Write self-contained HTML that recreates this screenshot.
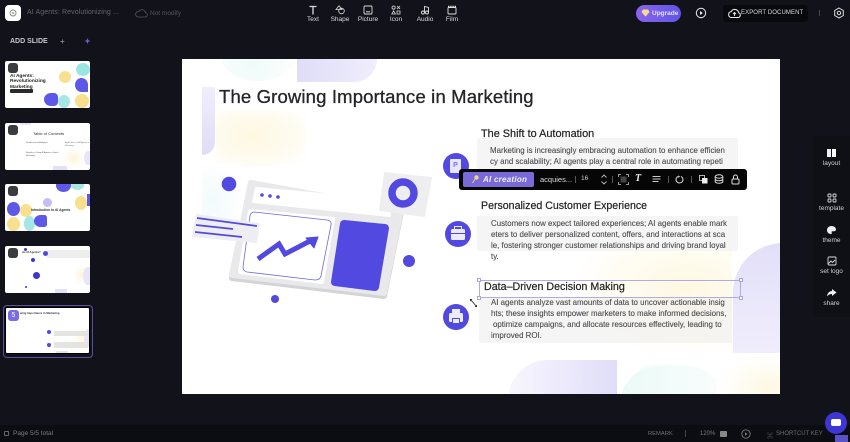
<!DOCTYPE html>
<html><head><meta charset="utf-8">
<style>
*{box-sizing:border-box;margin:0;padding:0}
html,body{width:850px;height:442px;overflow:hidden;background:#12131a;font-family:"Liberation Sans","Noto Sans CJK SC",sans-serif}
.a{position:absolute}
.t{position:absolute;white-space:nowrap}
.tool{position:absolute;top:5px;width:30px;text-align:center;color:#d8d8dc;font-size:6.5px}
.tool svg{display:block;margin:0 auto 1px}
.side{position:absolute;left:813px;width:37px;text-align:center;color:#d0d0d4;font-size:6.5px}
.side svg{display:block;margin:0 auto 2px}
.thumb{position:absolute;left:5px;width:85px;height:47px;background:#fff;border-radius:2px;overflow:hidden}
.num{position:absolute;left:3px;top:2px;width:10px;height:10px;border-radius:3px;background:#3b3b40}
.p{position:absolute;font-size:7.9px;line-height:11px;color:#4a4a4e;white-space:nowrap;-webkit-text-stroke:.1px #4a4a4e}
.h{position:absolute;font-size:10.6px;color:#222;white-space:nowrap;-webkit-text-stroke:.2px #222}
.circ{position:absolute;width:26px;height:26px;border-radius:50%;background:#5249e0}
.box{position:absolute;background:rgba(236,236,236,.55);border-radius:2px}
.hd{position:absolute;width:4px;height:4px;background:#fff;border:1px solid #a9a3e0}
</style></head>
<body>
<div class="a" style="left:0;top:0;width:850px;height:442px;overflow:hidden">

<!-- top bar -->
<div class="a" style="left:5px;top:5px;width:16px;height:16px;background:#fff;border-radius:4px"></div>
<svg class="a" style="left:9px;top:9px" width="8" height="8" viewBox="0 0 8 8"><circle cx="4" cy="4" r="3" fill="none" stroke="#888" stroke-width=".9"/><circle cx="4" cy="4" r="1" fill="#999"/></svg>
<div class="t" style="left:27px;top:9px;font-size:7px;color:#63646c;letter-spacing:.1px">AI Agents: Revolutionizing ...</div>
<svg class="a" style="left:135px;top:8px" width="13" height="10" viewBox="0 0 13 10"><path d="M3 9h7a2.2 2.2 0 0 0 .3-4.4A3.4 3.4 0 0 0 4 3.4 2.800 2.800 0 0 0 3 9z" fill="none" stroke="#55565c" stroke-width=".8"/></svg>
<div class="t" style="left:150px;top:10px;font-size:6.5px;color:#55565c">Not modify</div>

<div class="tool" style="left:298px"><svg width="10" height="10" viewBox="0 0 10 10"><path d="M1.500 1.500h7M5 1.500v8" stroke="#ddd" stroke-width="1.300" fill="none"/></svg>Text</div>
<div class="tool" style="left:325px"><svg width="11" height="10" viewBox="0 0 11 10"><path d="M4 .8 7 4.500H1z" fill="none" stroke="#ddd" stroke-width=".8"/><circle cx="6.500" cy="6" r="2.800" fill="none" stroke="#ddd" stroke-width=".8"/></svg>Shape</div>
<div class="tool" style="left:353px"><svg width="10" height="10" viewBox="0 0 10 10"><rect x="1" y="1" width="8" height="8" rx="1" fill="none" stroke="#ddd" stroke-width=".9"/><path d="M3 6.800h4" stroke="#ddd" stroke-width="1"/></svg>Picture</div>
<div class="tool" style="left:381px"><svg width="10" height="10" viewBox="0 0 10 10"><circle cx="2.600" cy="2.600" r="1.600" fill="none" stroke="#ddd" stroke-width=".8"/><path d="M6 1l3 3M9 1 6 4" stroke="#ddd" stroke-width=".8"/><path d="M2.600 5.800 4.400 9H.8z" fill="none" stroke="#ddd" stroke-width=".8"/><rect x="6" y="6" width="3" height="3" fill="none" stroke="#ddd" stroke-width=".8"/></svg>Icon</div>
<div class="tool" style="left:410px"><svg width="10" height="10" viewBox="0 0 10 10"><circle cx="3" cy="7.500" r="1.500" fill="none" stroke="#ddd" stroke-width=".9"/><path d="M4.500 7.500V1.500l4 1v5" fill="none" stroke="#ddd" stroke-width=".9"/><circle cx="7" cy="7.500" r="1.500" fill="none" stroke="#ddd" stroke-width=".9"/></svg>Audio</div>
<div class="tool" style="left:437px"><svg width="10" height="10" viewBox="0 0 10 10"><rect x="1" y="2.500" width="8" height="6.500" rx=".8" fill="none" stroke="#ddd" stroke-width=".9"/><path d="M1 1.500h8" stroke="#ddd" stroke-width="1.400" stroke-dasharray="1.400 .8"/></svg>Film</div>

<div class="a" style="left:636px;top:5px;width:45px;height:17px;border-radius:9px;background:linear-gradient(90deg,#8a63ee,#5f55e8)"></div>
<svg class="a" style="left:641px;top:9px" width="9" height="8" viewBox="0 0 9 8"><path d="M2 .5h5L8.600 3 4.500 7.600.4 3z" fill="#f4dc8a"/></svg>
<div class="t" style="left:652px;top:10px;font-size:6.5px;font-weight:bold;color:#e6e3fb">Upgrade</div>
<svg class="a" style="left:695px;top:7px" width="12" height="12" viewBox="0 0 12 12"><circle cx="6" cy="6" r="4.700" fill="none" stroke="#eee" stroke-width="1"/><path d="M5 4l2.800 2L5 8z" fill="#eee"/></svg>
<div class="a" style="left:723px;top:5px;width:85px;height:17px;border-radius:3px;background:#08090c"></div>
<svg class="a" style="left:728px;top:7px" width="13" height="12" viewBox="0 0 13 12"><path d="M3 10.500h7.200a2.500 2.500 0 0 0 .5-4.800A4 4 0 0 0 3.200 4.600 3 3 0 0 0 3 10.500z" fill="none" stroke="#eee" stroke-width="1"/><path d="M6.500 9V5.500M5 7l1.500-1.500L8 7" stroke="#eee" stroke-width=".9" fill="none"/></svg>
<div class="t" style="left:741px;top:10px;font-size:6px;color:#dcdce0;letter-spacing:.1px">EXPORT DOCUMENT</div>
<div class="a" style="left:819px;top:10px;width:1px;height:6px;background:#44454a"></div>
<svg class="a" style="left:833px;top:7px" width="12" height="12" viewBox="0 0 12 12"><path d="M6 1 10.300 3.500v5L6 11 1.700 8.500v-5z" fill="none" stroke="#ddd" stroke-width="1"/><circle cx="6" cy="6" r="1.700" fill="none" stroke="#ddd" stroke-width="1"/></svg>

<!-- left -->
<div class="t" style="left:10px;top:38px;font-size:7px;font-weight:bold;color:#c6c6cb">ADD SLIDE</div>
<div class="t" style="left:60px;top:37px;font-size:8px;color:#a5a5aa">+</div>
<svg class="a" style="left:84px;top:37px" width="7" height="8" viewBox="0 0 7 8"><path d="M3.500 1 4.400 3.200 6.500 4 4.400 4.800 3.500 7 2.600 4.800.5 4 2.600 3.200z" fill="#6a5be0"/></svg>

<div class="thumb" style="top:61px">
  <div class="a" style="left:71px;top:2px;width:14px;height:13px;border-radius:50%;background:#9be6e2"></div>
  <div class="a" style="left:54px;top:10px;width:12px;height:12px;border-radius:50%;background:#f8e08e"></div>
  <div class="a" style="left:70px;top:17px;width:13px;height:14px;border-radius:50% 50% 0 50%;background:#5e58e6"></div>
  <div class="a" style="left:39px;top:32px;width:14px;height:13px;border-radius:50% 30% 30% 50%;background:#5e58e6"></div>
  <div class="a" style="left:53px;top:34px;width:12px;height:13px;border-radius:50%;background:#a5e7e4"></div>
  <div class="a" style="left:70px;top:33px;width:14px;height:14px;border-radius:50%;background:#f8e08e"></div>
  <div class="t" style="left:5px;top:13px;font-size:4.800px;line-height:5.300px;font-weight:bold;color:#222">AI Agents:<br>Revolutionizing<br>Marketing</div>
  <div class="a" style="left:5px;top:28px;width:23px;height:4px;border-radius:1px;background:#2a2a2e"></div>
  <div class="num"></div>
</div>
<div class="thumb" style="top:123px">
  <div class="t" style="left:28px;top:8px;font-size:4px;color:#333">Table of Contents</div>
  <div class="t" style="left:21px;top:19px;font-size:2px;color:#555">Introduction to AI Agents</div>
  <div class="t" style="left:60px;top:19px;font-size:2px;line-height:2.500px;color:#777">Applications of AI Agents in<br>Marketing</div>
  <div class="t" style="left:21px;top:29px;font-size:2px;line-height:2.500px;color:#555">Benefits of Using AI Agents in Digital<br>Marketing</div>
  <div class="a" style="left:57px;top:25px;width:24px;height:20px;background:radial-gradient(#fdf5d8,#fff 70%)"></div>
  <div class="a" style="left:79px;top:28px;width:8px;height:14px;border-radius:50% 0 0 50%;background:#e8e5fb"></div>
  <div class="a" style="left:15px;top:0;width:11px;height:2px;background:#e6e3fa"></div>
  <div class="a" style="left:48px;top:43px;width:14px;height:4px;background:#e3e1f8"></div>
  <div class="num"></div>
</div>
<div class="thumb" style="top:184px">
  <div class="a" style="left:51px;top:-5px;width:15px;height:13px;border-radius:50%;background:#5e58e6"></div>
  <div class="a" style="left:66px;top:-3px;width:13px;height:9px;border-radius:50%;background:#a5e7e4"></div>
  <div class="a" style="left:2px;top:18px;width:13px;height:14px;border-radius:50%;background:#5e58e6"></div>
  <div class="a" style="left:15px;top:20px;width:12px;height:13px;border-radius:50%;background:#f8e08e"></div>
  <div class="a" style="left:70px;top:12px;width:12px;height:14px;border-radius:50%;background:#f8e08e"></div>
  <div class="a" style="left:82px;top:10px;width:6px;height:12px;background:#5e58e6"></div>
  <div class="a" style="left:38px;top:14px;width:9px;height:9px;border-radius:50%;background:#c3bff2"></div>
  <div class="a" style="left:2px;top:33px;width:13px;height:14px;border-radius:50%;background:#f8e08e"></div>
  <div class="a" style="left:19px;top:32px;width:11px;height:15px;border-radius:50%;background:#a5e7e4"></div>
  <div class="a" style="left:29px;top:31px;width:13px;height:12px;border-radius:50% 20% 20% 50%;background:#5e58e6"></div>
  <div class="t" style="left:26px;top:24px;font-size:3.300px;font-weight:bold;color:#333">Introduction to AI Agents</div>
  <div class="num"></div>
</div>
<div class="thumb" style="top:246px">
  <div class="t" style="left:17px;top:4px;font-size:2.800px;font-weight:bold;color:#333">do AI Agents?</div>
  <div class="a" style="left:42px;top:4px;width:44px;height:8px;background:#eee"></div>
  <div class="a" style="left:38px;top:5px;width:5px;height:5px;border-radius:50%;background:#5249e0"></div>
  <div class="a" style="left:26px;top:12px;width:4px;height:4px;border-radius:50%;background:#3d36d0"></div>
  <div class="a" style="left:19px;top:2px;width:3px;height:3px;border-radius:50%;background:#3d36d0"></div>
  <div class="a" style="left:28px;top:26px;width:7px;height:7px;border-radius:50%;background:#3d36d0"></div>
  <div class="a" style="left:20px;top:40px;width:2px;height:2px;border-radius:50%;background:#3d36d0"></div>
  <div class="a" style="left:68px;top:19px;width:17px;height:20px;background:radial-gradient(#fdf5d8,#fff 70%)"></div>
  <div class="a" style="left:78px;top:21px;width:9px;height:18px;border-radius:50% 0 0 50%;background:#e8e5fb"></div>
  <div class="a" style="left:50px;top:43px;width:12px;height:4px;background:#e3e1f8"></div>
  <div class="num"></div>
</div>
<div class="a" style="left:3px;top:305px;width:90px;height:53px;border:1px solid #5b4f9e;border-radius:4px"></div>
<div class="thumb" style="top:307px;border:1px solid #000">
  <div class="t" style="left:14px;top:3px;font-size:2.800px;font-weight:bold;color:#333">wing Importance in Marketing</div>
  <div class="a" style="left:68px;top:19px;width:17px;height:20px;background:radial-gradient(#fdf5d8,#fff 70%)"></div>
  <div class="a" style="left:78px;top:21px;width:9px;height:18px;border-radius:50% 0 0 50%;background:#e8e5fb"></div>
  <div class="a" style="left:41px;top:22px;width:4px;height:4px;border-radius:50%;background:#5249e0"></div>
  <div class="a" style="left:48px;top:23px;width:34px;height:5px;background:#e4e4e0"></div>
  <div class="a" style="left:41px;top:35px;width:4px;height:4px;border-radius:50%;background:#5249e0"></div>
  <div class="a" style="left:48px;top:34px;width:34px;height:6px;background:#e4e4e0"></div>
  <div class="a" style="left:50px;top:43px;width:12px;height:4px;background:#e3e1f8"></div>
</div>
<div class="a" style="left:8px;top:310px;width:11px;height:11px;border-radius:3px;background:#7a6ce8;color:#fff;font-size:7px;line-height:11px;text-align:center">5</div>

<!-- bottom bar -->
<div class="a" style="left:0;top:425px;width:850px;height:17px;background:#0c0d12"></div>
<div class="t" style="left:13px;top:430px;font-size:6.500px;color:#7b7c83">Page 5/5 total</div>
<div class="a" style="left:4px;top:431px;width:5px;height:5px;border:1px solid #666;border-radius:1px"></div>
<div class="t" style="left:648px;top:431px;font-size:5.800px;color:#6f7075">REMARK</div>
<div class="a" style="left:685px;top:430px;width:1px;height:7px;background:#44454a"></div>
<div class="t" style="left:700px;top:431px;font-size:6px;color:#77787d">120%</div>
<div class="a" style="left:720px;top:431px;width:7px;height:6px;background:#888;border-radius:1px"></div>
<svg class="a" style="left:741px;top:429px" width="10" height="10" viewBox="0 0 10 10"><circle cx="5" cy="5" r="4.200" fill="none" stroke="#777" stroke-width=".9"/><path d="M4 3.200 6.500 5 4 6.800z" fill="#777"/></svg>
<div class="t" style="left:767px;top:431px;font-size:6px;color:#6a6b70">⌘</div>
<div class="t" style="left:776px;top:431px;font-size:6px;color:#6a6b70">SHORTCUT KEY</div>
<div class="a" style="left:835px;top:435px;width:13px;height:7px;background:#5a52c8"></div>
<div class="a" style="left:825px;top:412px;width:22px;height:22px;border-radius:50%;background:#3d36d4"></div>
<div class="a" style="left:831px;top:419px;width:10px;height:7px;background:#fff;border-radius:2px"></div>

<!-- right panel -->
<div class="a" style="left:813px;top:136px;width:37px;height:181px;background:#0f1015;border-radius:4px 0 0 4px"></div>
<div class="side" style="top:148px"><svg width="11" height="10" viewBox="0 0 11 10"><path d="M1 1h4v8H1z" fill="#eee"/><path d="M6 1h4v8H6z" fill="#fff"/></svg>layout</div>
<div class="side" style="top:193px"><svg width="10" height="10" viewBox="0 0 10 10"><g fill="none" stroke="#ddd" stroke-width=".9"><rect x="1" y="1" width="3" height="3" rx=".7"/><rect x="6" y="1" width="3" height="3" rx=".7"/><rect x="1" y="6" width="3" height="3" rx=".7"/><rect x="6" y="6" width="3" height="3" rx=".7"/></g></svg>template</div>
<div class="side" style="top:225px"><svg width="11" height="10" viewBox="0 0 11 10"><path d="M5.500 1C2.700 1 1 3 1 5.200 1 7.500 3 9 5 9c1 0 .9-1 .6-1.500-.3-.7.2-1.200 1-1.200h1.400C9.200 6.300 10 5.500 10 4.500 10 2.500 8 1 5.500 1z" fill="#eee"/></svg>theme</div>
<div class="side" style="top:256px"><svg width="10" height="10" viewBox="0 0 10 10"><rect x="1" y="1" width="8" height="8" rx="1" fill="none" stroke="#ddd" stroke-width=".9"/><path d="M1.500 7.500 4 5l1.500 1.500L8 4" stroke="#ddd" stroke-width=".9" fill="none"/></svg>set logo</div>
<div class="side" style="top:288px"><svg width="11" height="10" viewBox="0 0 11 10"><path d="M6 1l4.500 3.500L6 8V6C4 6 2.200 6.700 1 8.500 1.300 5.500 3 3 6 3z" fill="#eee"/></svg>share</div>

<!-- slide -->
<div class="a" style="left:182px;top:59px;width:598px;height:335px;background:#fff;overflow:hidden">
  <div class="a" style="left:40px;top:-25px;width:72px;height:47px;border-radius:0 0 50% 50%;background:radial-gradient(circle at 40% 60%,#eefbf9,#fbfefd 80%)"></div>
  <div class="a" style="left:115px;top:0;width:80px;height:23px;border-radius:0 0 28px 0;background:linear-gradient(90deg,#dfdcf8,#f0eefc)"></div>
  <div class="a" style="left:20px;top:28px;width:13px;height:68px;border-radius:0 0 30px 0;background:linear-gradient(180deg,#f0eefb,#dfdcf7)"></div>
  <div class="a" style="left:34px;top:52px;width:90px;height:56px;background:radial-gradient(ellipse at 40% 45%,#fef8e2,#fefbf0 55%,#fff 90%)"></div>
  <div class="a" style="left:20px;top:105px;width:40px;height:75px;background:radial-gradient(ellipse at 25% 50%,#f2fafc,#fff 75%)"></div>
  <div class="a" style="left:400px;top:190px;width:150px;height:100px;background:radial-gradient(ellipse at 70% 40%,#fef8e2,#fffdf6 60%,#fff 80%)"></div>
  <div class="a" style="left:551px;top:184px;width:60px;height:110px;border-radius:50px 0 0 0;background:linear-gradient(180deg,#e2dff8,#f0eefc)"></div>
  <div class="a" style="left:326px;top:301px;width:109px;height:40px;border-radius:42px 0 0 0;background:linear-gradient(90deg,#f8f7fe,#e0ddf8)"></div>
  <div class="a" style="left:438px;top:306px;width:105px;height:40px;border-radius:50px 50px 0 0;background:linear-gradient(90deg,#ebfaf7,#fafdfc)"></div>
  <div class="a" style="left:535px;top:295px;width:63px;height:40px;background:radial-gradient(ellipse at 80% 90%,#fef8e2,#fff 70%)"></div>

  <div class="t" style="left:37px;top:27px;font-size:18.500px;letter-spacing:.15px;color:#252529;-webkit-text-stroke:.3px #252529">The Growing Importance in Marketing</div>

  <!-- illustration -->
  <svg class="a" style="left:0;top:101px" width="260" height="150" viewBox="0 0 260 150">
    <circle cx="47" cy="24" r="7.300" fill="#5249e0"/>
    <circle cx="227" cy="101" r="6" fill="#5249e0"/>
    <circle cx="93" cy="139" r="4" fill="#5249e0"/>
    <path d="M69 23 219 52 202 136 50 118Z" fill="#d4d4d6" stroke="#d4d4d6" stroke-width="6" stroke-linejoin="round"/>
    <path d="M69 23 219 50 202 133 50 115Z" fill="#e9e9eb" stroke="#e9e9eb" stroke-width="6" stroke-linejoin="round"/>
    <path d="M74 28 205 40 208 56 71 42Z" fill="#fff" stroke="#fff" stroke-width="2" stroke-linejoin="round"/>
    <circle cx="80" cy="35" r="1.800" fill="#5249e0"/><circle cx="88" cy="36" r="1.800" fill="#5249e0"/><circle cx="96" cy="37" r="1.800" fill="#5249e0"/>
    <path d="M68 51 151 59 140 122 58 112Z" fill="#fff" stroke="#fff" stroke-width="4" stroke-linejoin="round"/>
    <path d="M72 52 145 60Q150 61 149 65L139 116Q138 120 133 120L65 112Q61 111 61 107L68 56Q69 52 72 52Z" fill="#fff" stroke="#6f67e0" stroke-width=".8"/>
    <path d="M162 64 203 68 193 127 153 122Z" fill="#5249e0" stroke="#5249e0" stroke-width="8" stroke-linejoin="round"/>
    <path d="M203 13 249 18 242 56 198 50Z" fill="#eeeef0" stroke="#eeeef0" stroke-width="2" stroke-linejoin="round"/>
    <circle cx="221" cy="33" r="11" fill="none" stroke="#5249e0" stroke-width="7.500"/>
    <path d="M15 55 77 64 74 82 11 76Z" fill="#eeeef2" stroke="#eeeef2" stroke-width="2" stroke-linejoin="round"/>
    <path d="M15 58 75 66M14 65 51 69M13 72 60 77" stroke="#5249e0" stroke-width="1.800" fill="none"/>
    <path d="M76 99 97 84 103 94 128 81" fill="none" stroke="#5249e0" stroke-width="5"/>
    <path d="M136 77 124 78 132 88Z" fill="#5249e0" stroke="#5249e0" stroke-width="1" stroke-linejoin="round"/>
  </svg>

  <!-- Section 1 -->
  <div class="box" style="left:295px;top:79px;width:261px;height:35px"></div>
  <div class="h" style="left:299px;top:69px;font-size:10.900px">The Shift to Automation</div>
  <div class="p" style="left:308px;top:86px">Marketing is increasingly embracing automation to enhance efficien</div>
  <div class="p" style="left:308px;top:97px">cy and scalability; AI agents play a central role in automating repeti</div>
  <div class="circ" style="left:261px;top:94px"></div>
  <div class="a" style="left:268px;top:100px;width:11px;height:14px;background:#e8e6fb;border-radius:1px;color:#7a72e8;font-size:7px;line-height:14px;text-align:center;font-weight:bold">P</div>

  <!-- Section 2 -->
  <div class="box" style="left:295px;top:157px;width:261px;height:35px"></div>
  <div class="h" style="left:299px;top:141px">Personalized Customer Experience</div>
  <div class="p" style="left:309px;top:159px">Customers now expect tailored experiences; AI agents enable mark</div>
  <div class="p" style="left:309px;top:170px">eters to deliver personalized content, offers, and interactions at sca</div>
  <div class="p" style="left:309px;top:181px">le, fostering stronger customer relationships and driving brand loyal</div>
  <div class="p" style="left:309px;top:192px">ty.</div>
  <div class="circ" style="left:263px;top:162px"></div>
  <div class="a" style="left:269px;top:170px;width:14px;height:11px;background:#ecebfc;border-radius:1.500px"></div>
  <div class="a" style="left:272px;top:167px;width:8px;height:4px;border:1px solid #ecebfc;border-bottom:none"></div>
  <div class="a" style="left:269px;top:174px;width:14px;height:1px;background:#5249e0"></div>

  <!-- Section 3 -->
  <div class="box" style="left:297px;top:238px;width:253px;height:46px"></div>
  <div class="h" style="left:302px;top:222px;font-size:10.700px">Data–Driven Decision Making</div>
  <div class="a" style="left:297px;top:221px;width:262px;height:18px;border:1px solid #b0abe6"></div>
  <div class="hd" style="left:295px;top:219px"></div><div class="hd" style="left:557px;top:219px"></div>
  <div class="hd" style="left:295px;top:237px"></div><div class="hd" style="left:557px;top:237px"></div>
  <div class="p" style="left:309px;top:238px">AI agents analyze vast amounts of data to uncover actionable insig</div>
  <div class="p" style="left:309px;top:249px">hts; these insights empower marketers to make informed decisions,</div>
  <div class="p" style="left:311px;top:260px">optimize campaigns, and allocate resources effectively, leading to</div>
  <div class="p" style="left:309px;top:271px">improved ROI.</div>
  <div class="circ" style="left:261px;top:245px"></div>
  <div class="a" style="left:267px;top:254px;width:14px;height:9px;background:#ecebfc;border-radius:1.500px"></div>
  <div class="a" style="left:270px;top:250px;width:8px;height:4px;background:#ecebfc"></div>
  <div class="a" style="left:270px;top:259px;width:8px;height:6px;background:#ecebfc;border:1px solid #5249e0"></div>
  <svg class="a" style="left:287px;top:239px" width="9" height="10" viewBox="0 0 9 10"><path d="M1.500 1.500 7.500 8.500" stroke="#222" stroke-width=".8"/><path d="M1 1h2.400L1 3.400zM8 9H5.600L8 6.600z" fill="#222"/></svg>
</div>

<!-- floating toolbar -->
<div class="a" style="left:459px;top:169px;width:288px;height:21px;background:#060607;border-radius:3px"></div>
<div class="a" style="left:463px;top:172px;width:71px;height:15px;background:#7a6ad8;border-radius:2px"></div>
<svg class="a" style="left:471px;top:174px" width="9" height="11" viewBox="0 0 9 11"><circle cx="5.500" cy="3.500" r="2.200" fill="#e9d98a"/><path d="M4 5 1.500 9" stroke="#d9cfa0" stroke-width="1"/></svg>
<div class="t" style="left:483px;top:175px;font-size:8px;font-style:italic;font-weight:bold;color:#f1efff;letter-spacing:.25px">AI creation</div>
<div class="t" style="left:540px;top:175px;font-size:7.500px;color:#ddd">acquies...</div>
<div class="a" style="left:575px;top:176px;width:1px;height:7px;background:#555"></div>
<div class="t" style="left:581px;top:175px;font-size:6.500px;color:#ccc">16</div>
<svg class="a" style="left:600px;top:173px" width="8" height="13" viewBox="0 0 8 13"><path d="M1.500 4.500 4 2l2.500 2.500M1.500 8.500 4 11l2.500-2.500" fill="none" stroke="#bbb" stroke-width=".9"/></svg>
<div class="a" style="left:612px;top:176px;width:1px;height:7px;background:#555"></div>
<svg class="a" style="left:618px;top:174px" width="11" height="11" viewBox="0 0 11 11"><rect x="2.500" y="2.500" width="6" height="6" fill="#444"/><path d="M.5 3V.5H3M8 .5h2.500V3M.5 8v2.500H3M8 10.500h2.500V8" fill="none" stroke="#999" stroke-width="1"/></svg>
<div class="t" style="left:635px;top:173px;font-size:10px;font-weight:bold;font-style:italic;font-family:'Liberation Serif',serif;color:#eee">T</div>
<svg class="a" style="left:652px;top:175px" width="9" height="9" viewBox="0 0 9 9"><path d="M.5 1.500h8M.5 4h8M.5 6.500h6" stroke="#ccc" stroke-width="1.100"/></svg>
<div class="a" style="left:668px;top:176px;width:1px;height:7px;background:#555"></div>
<svg class="a" style="left:675px;top:175px" width="9" height="9" viewBox="0 0 9 9"><path d="M3 1.400A3.500 3.500 0 1 0 6 1.400" fill="none" stroke="#ddd" stroke-width="1"/><path d="M3 .5 5 1.500 3.500 3z" fill="#ddd"/></svg>
<div class="a" style="left:691px;top:176px;width:1px;height:7px;background:#555"></div>
<svg class="a" style="left:699px;top:175px" width="9" height="9" viewBox="0 0 9 9"><rect x=".5" y=".5" width="5" height="5" fill="none" stroke="#ddd" stroke-width=".8"/><rect x="3" y="3" width="5.500" height="5.500" fill="#eee"/></svg>
<svg class="a" style="left:714px;top:174px" width="10" height="10" viewBox="0 0 10 10"><ellipse cx="5" cy="2.500" rx="3.800" ry="1.700" fill="none" stroke="#ddd"/><path d="M1.200 2.500v5c0 1 1.700 1.700 3.800 1.700s3.800-.7 3.800-1.700v-5M1.200 5c0 1 1.700 1.700 3.800 1.700S8.800 6 8.800 5" fill="none" stroke="#ddd"/></svg>
<svg class="a" style="left:731px;top:174px" width="9" height="11" viewBox="0 0 9 11"><rect x="1" y="5" width="7" height="5" rx="1" fill="none" stroke="#ddd"/><path d="M2.500 5V3a2 2 0 0 1 4 0v2" fill="none" stroke="#ddd"/></svg>

</div>
</body></html>
